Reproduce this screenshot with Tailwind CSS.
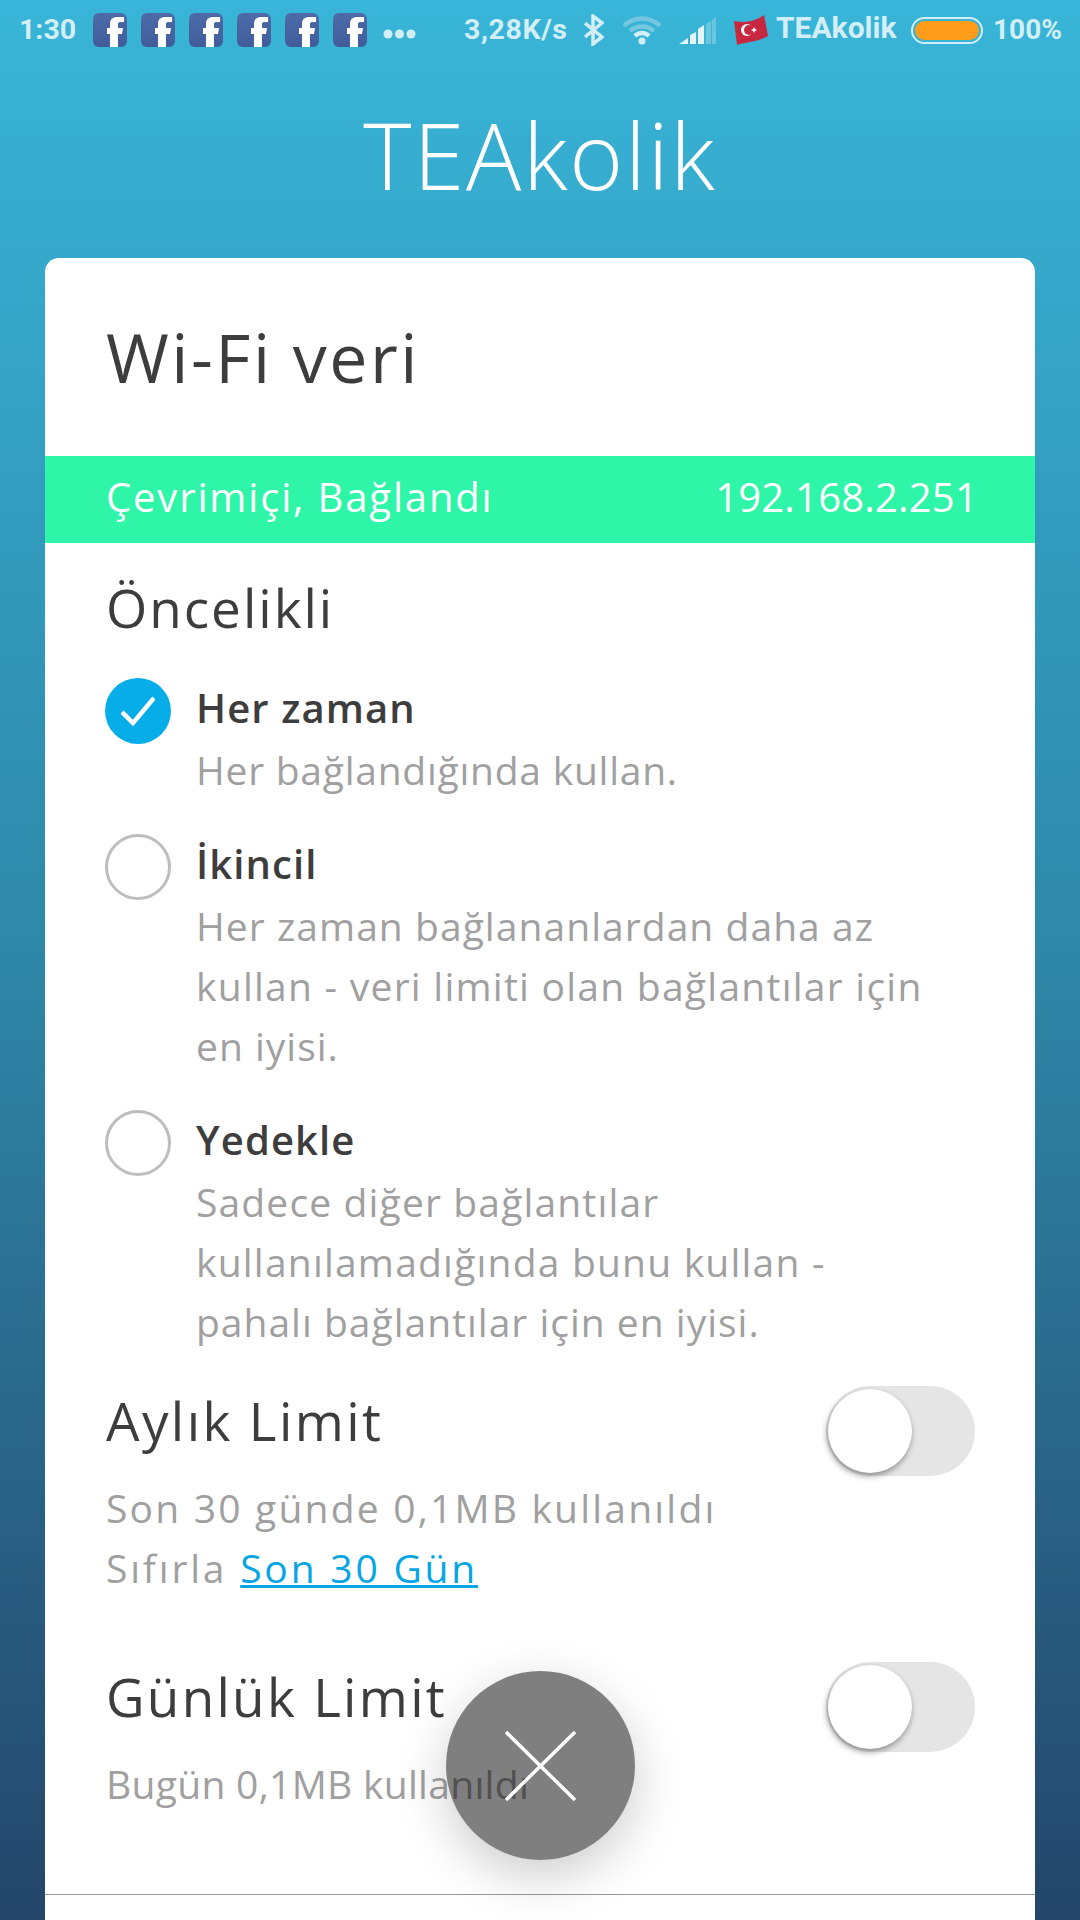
<!DOCTYPE html>
<html lang="tr"><head><meta charset="utf-8"><script src="https://cdn.jsdelivr.net/npm/@tailwindcss/browser@4"></script></head>
<body class="m-0">
<svg class="absolute w-0 h-0"><defs><linearGradient id="fbg" x1="0" y1="0" x2="0" y2="1"><stop offset="0" stop-color="#4f6ca9"/><stop offset="1" stop-color="#3f5c9b"/></linearGradient><symbol id="fb" viewBox="0 0 34 34"><rect width="34" height="34" rx="6" fill="url(#fbg)"/><path d="M17 34V21H14V15H17V11C17 6 20 4 24 4H31V9H27C25.5 9 25 10 25 12V15H30L29 21H25V34Z" fill="#fff"/></symbol></defs></svg>
<div class="relative w-[1080px] h-[1920px] overflow-hidden bg-gradient-to-b from-[#38b5d8] via-[#2e87a8] to-[#23466a] font-['Open_Sans',sans-serif]">
  <div class="flex items-center h-[60px] pl-[19px] text-[#d3eef6] font-['Roboto',sans-serif] font-bold text-[28.5px]">
    <span class="w-[74px]">1:30</span>
    <div class="flex gap-[14px]">
      <svg class="w-[34px] h-[34px]"><use href="#fb"/></svg>
      <svg class="w-[34px] h-[34px]"><use href="#fb"/></svg>
      <svg class="w-[34px] h-[34px]"><use href="#fb"/></svg>
      <svg class="w-[34px] h-[34px]"><use href="#fb"/></svg>
      <svg class="w-[34px] h-[34px]"><use href="#fb"/></svg>
      <svg class="w-[34px] h-[34px]"><use href="#fb"/></svg>
    </div>
    <svg class="ml-[16px] mt-[8px] w-[33px] h-[12px]" viewBox="0 0 33 12"><circle cx="5" cy="6" r="4.5" fill="#d3eef6"/><circle cx="16.5" cy="6" r="4.5" fill="#d3eef6"/><circle cx="28" cy="6" r="4.5" fill="#d3eef6"/></svg>
    <span class="ml-[48px] w-[118px] tracking-[0.6px]">3,28K/s</span>
    <svg class="w-[20px] h-[32px] ml-[2px]" viewBox="0 0 20 32" fill="none" stroke="#d3eef6" stroke-width="3.5"><path d="M1 9 18 23 9 30V2l9 7L1 23"/></svg>
    <svg class="w-[38px] h-[29px] ml-[19px]" viewBox="0 0 38 29"><path d="M1 10C11 0 27 0 37 10" fill="none" stroke="#74c7df" stroke-width="4.5"/><path d="M7 15C14 9 24 9 31 15" fill="none" stroke="#74c7df" stroke-width="4.5"/><path d="M12 20c4-4 10-4 14 0" fill="none" stroke="#d3eef6" stroke-width="4.5"/><circle cx="19" cy="25" r="3.5" fill="#d3eef6"/></svg>
    <svg class="w-[37px] h-[27px] ml-[18px]" viewBox="0 0 37 27"><path d="M0 27 9 21V27ZM11 18l6-3v12h-6zM19 12l6-4v19h-6z" fill="#e3f4fa"/><path d="M27 7l5-3v23h-5zM33 3l4-3v27h-4z" fill="#6cc5de"/></svg>
    <svg class="w-[34px] h-[30px] ml-[18px]" viewBox="0 0 34 30"><path d="M0 6C11 8 20 7 30 0L34 21C24 27 12 27 3 30Z" fill="#c8283f"/><circle cx="13" cy="15" r="6" fill="#fff"/><circle cx="15" cy="15" r="5" fill="#c8283f"/><path d="m20 12 1 2 2 1-2 1-1 2-1-2-2-1 2-1z" fill="#fff"/></svg>
    <span class="ml-[8px] w-[122px] text-[30px] leading-[36px] mb-[4px]">TEAkolik</span>
    <div class="ml-[13px] w-[72px] h-[27px] border-2 border-[#d3eef6] rounded-full p-[2px]"><div class="h-full rounded-full bg-[#ff9c1a]"></div></div>
    <span class="ml-[10px] text-[28px]">100%</span>
  </div>
  <div class="h-[198px] pt-[39px] flex justify-center items-start">
    <h1 class="text-[92px] leading-[112px] font-light text-white tracking-[1.8px]">TEAkolik</h1>
  </div>
  <main class="mx-[45px] h-[1700px] bg-white rounded-t-[14px] text-[#3d3d3d]">
    <h2 class="h-[198px] pl-[61px] pt-[54px] text-[68px] leading-[90px] font-normal tracking-[2.5px]">Wi-Fi veri</h2>
    <div class="h-[87px] pl-[61px] pr-[57px] pb-[6px] flex justify-between items-center bg-[#2ef5a7] text-white text-[40px]"><span class="tracking-[1.85px]">Çevrimiçi, Bağlandı</span><span class="tracking-[0.2px]">192.168.2.251</span></div>
    <div class="pl-[61px] pr-[60px]">
      <h3 class="mt-[30px] h-[78px] text-[53px] leading-[70px] font-normal tracking-[2px]">Öncelikli</h3>
      <div class="mt-[27px] -ml-[1px] flex gap-[25px]">
        <div class="w-[66px] h-[66px] rounded-full bg-[#06ade9] flex items-center justify-center shrink-0"><svg class="w-[34px] h-[30px]" viewBox="0 0 34 30" fill="none" stroke="#fff" stroke-width="4.5"><path d="M1 16 12 27 33 2"/></svg></div>
        <div><p class="h-[62px] leading-[60px] text-[40px] font-semibold tracking-[1.1px]">Her zaman</p><p class="text-[39px] leading-[60px] text-[#a0a0a0] tracking-[0.75px]">Her bağlandığında kullan.</p></div>
      </div>
      <div class="mt-[34px] -ml-[1px] flex gap-[25px]">
        <div class="w-[66px] h-[66px] rounded-full border-[3px] border-[#bdbdbd] shrink-0"></div>
        <div><p class="h-[62px] leading-[60px] text-[40px] font-semibold tracking-[1.1px]">İkincil</p><p class="text-[39px] leading-[60px] text-[#a0a0a0]"><span class="tracking-[1.05px]">Her zaman bağlananlardan daha az</span><br><span class="tracking-[1.25px]">kullan - veri limiti olan bağlantılar için</span><br><span class="tracking-[1px]">en iyisi.</span></p></div>
      </div>
      <div class="mt-[34px] -ml-[1px] flex gap-[25px]">
        <div class="w-[66px] h-[66px] rounded-full border-[3px] border-[#bdbdbd] shrink-0"></div>
        <div><p class="h-[62px] leading-[60px] text-[40px] font-semibold tracking-[1.1px]">Yedekle</p><p class="text-[39px] leading-[60px] text-[#a0a0a0]"><span class="tracking-[1.15px]">Sadece diğer bağlantılar</span><br><span class="tracking-[1.2px]">kullanılamadığında bunu kullan -</span><br><span class="tracking-[1px]">pahalı bağlantılar için en iyisi.</span></p></div>
      </div>
      <div class="mt-[34px] flex justify-between h-[90px]">
        <h3 class="text-[53px] leading-[70px] font-normal tracking-[2.4px]">Aylık Limit</h3>
        <div class="relative w-[149px] h-[90px] rounded-full bg-[#e5e5e5]"><div class="absolute left-[2px] top-[3px] w-[84px] h-[84px] rounded-full bg-white shadow-[-1px_3px_6px_rgba(0,0,0,0.4)]"></div></div>
      </div>
      <p class="mt-[2px] text-[39px] leading-[60px] text-[#a0a0a0]"><span class="tracking-[2.2px]">Son 30 günde 0,1MB kullanıldı</span><br><span class="tracking-[2.8px]">Sıfırla <a class="text-[#06a5e3] underline">Son 30 Gün</a></span></p>
      <div class="mt-[64px] flex justify-between h-[90px]">
        <h3 class="text-[53px] leading-[70px] font-normal tracking-[2.3px]">Günlük Limit</h3>
        <div class="relative w-[149px] h-[90px] rounded-full bg-[#e5e5e5]"><div class="absolute left-[2px] top-[3px] w-[84px] h-[84px] rounded-full bg-white shadow-[-1px_3px_6px_rgba(0,0,0,0.4)]"></div></div>
      </div>
      <p class="mt-[2px] text-[39px] leading-[60px] text-[#a0a0a0] tracking-[0.3px]">Bugün 0,1MB kullanıldı</p>
    </div>
    <div class="mt-[80px] h-px bg-[#999]"></div>
  </main>
  <div class="absolute left-[446px] top-[1671px] w-[189px] h-[189px] rounded-full bg-black/50 flex items-center justify-center shadow-[0_16px_50px_rgba(0,0,0,0.2)]">
    <svg class="w-[71px] h-[70px]" viewBox="0 0 71 70" stroke="#fff" stroke-width="3.5"><path d="M1 1 70 69M70 1 1 69"/></svg>
  </div>
</div>
</body></html>
